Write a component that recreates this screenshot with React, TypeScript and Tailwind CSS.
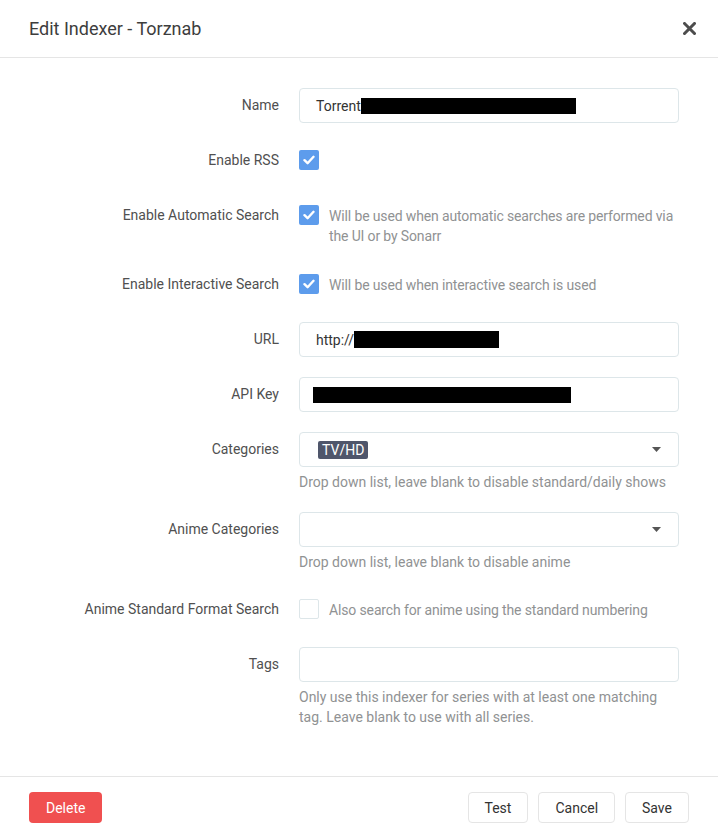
import React from "react";

const font = { fontFamily: "Roboto, 'Open Sans', sans-serif" };

function Check() {
  return (
    <span className="flex h-5 w-5 shrink-0 items-center justify-center rounded-[2px] bg-[#5d9cec]">
      <svg width="12" height="10" viewBox="0 0 12 10">
        <path d="M1.5 5.2 L4.6 8.2 L10.5 1.8" fill="none" stroke="#fff" strokeWidth="2.4" strokeLinecap="round" strokeLinejoin="round" />
      </svg>
    </span>
  );
}

function Row({ label, children }: { label: string; children: React.ReactNode }) {
  return (
    <div className="mb-5 flex gap-5">
      <div className="w-[249px] shrink-0 pt-[7px] text-right text-sm leading-5 text-[#505050]">{label}</div>
      <div className="w-[380px] shrink-0">{children}</div>
    </div>
  );
}

function Input({ children, select }: { children?: React.ReactNode; select?: boolean }) {
  return (
    <div className="flex h-[35px] items-center rounded-[4px] border border-[#dde6e9] bg-white pl-4 pr-[17px] text-sm text-[#333]">
      <div className="flex flex-1 items-center">{children}</div>
      {select && (
        <svg width="9" height="5" viewBox="0 0 9 5">
          <path d="M0 0 H9 L4.5 5 Z" fill="#555" />
        </svg>
      )}
    </div>
  );
}

function Help({ children }: { children: React.ReactNode }) {
  return <div className="mt-[5px] text-sm leading-5 text-[#909293]">{children}</div>;
}

function CheckRow({ label, checked, text, extra = "" }: { label: string; checked: boolean; text?: string; extra?: string }) {
  return (
    <Row label={label}>
      <div className={`flex min-h-[35px] gap-[10px] pt-[7px] ${extra}`}>
        {checked ? (
          <Check />
        ) : (
          <span className="h-5 w-5 shrink-0 rounded-[2px] border border-[#dde6e9] bg-white" />
        )}
        {text && <span className="mt-[1px] text-sm leading-5 tracking-[-0.01em] text-[#909293]">{text}</span>}
      </div>
    </Row>
  );
}

export default function App() {
  return (
    <div className="h-[838px] w-[718px] bg-white" style={font}>
      <div className="flex h-[58px] items-center justify-between border-b border-[#e5e5e5] pl-[29px] pr-[22px]">
        <h1 className="text-lg text-[#3d3d3d]">Edit Indexer - Torznab</h1>
        <svg width="13" height="13" viewBox="0 0 13 13">
          <path d="M1.5 1.5 L11.5 11.5 M11.5 1.5 L1.5 11.5" stroke="#4d4d4d" strokeWidth="3" strokeLinecap="square" />
        </svg>
      </div>

      <div className="h-[718px] px-[30px] pt-[30px]">
        <Row label="Name">
          <Input>
            <span>Torrent</span>
            <span className="inline-block h-4 w-[215px] bg-black" />
          </Input>
        </Row>

        <CheckRow label="Enable RSS" checked />
        <CheckRow label="Enable Automatic Search" checked extra="pb-[1px]" text="Will be used when automatic searches are performed via the UI or by Sonarr" />
        <CheckRow label="Enable Interactive Search" checked text="Will be used when interactive search is used" />

        <Row label="URL">
          <Input>
            <span>http://</span>
            <span className="inline-block h-[17px] w-[145px] bg-black" />
          </Input>
        </Row>

        <Row label="API Key">
          <div className="flex h-[35px] items-center rounded-[4px] border border-[#dde6e9] bg-white pl-[13px]">
            <span className="inline-block h-4 w-[258px] bg-black" />
          </div>
        </Row>

        <Row label="Categories">
          <Input select>
            <span className="ml-[2px] rounded-[2px] bg-[#4f566b] px-1 text-sm leading-[18px] text-white">TV/HD</span>
          </Input>
          <Help>Drop down list, leave blank to disable standard/daily shows</Help>
        </Row>

        <Row label="Anime Categories">
          <Input select />
          <Help>Drop down list, leave blank to disable anime</Help>
        </Row>

        <CheckRow label="Anime Standard Format Search" checked={false} text="Also search for anime using the standard numbering" />

        <Row label="Tags">
          <Input />
          <Help>Only use this indexer for series with at least one matching tag. Leave blank to use with all series.</Help>
        </Row>
      </div>

      <div className="flex items-center justify-between border-t border-[#e5e5e5] px-[29px] pt-[15px]">
        <button className="h-[31px] rounded-[4px] bg-[#f05050] px-[17px] text-sm text-white">Delete</button>
        <div className="flex gap-[10px]">
          {["Test", "Cancel", "Save"].map((b) => (
            <button key={b} className="h-[31px] rounded-[4px] border border-[#e5e5e5] bg-white px-4 text-sm text-[#333]">
              {b}
            </button>
          ))}
        </div>
      </div>
    </div>
  );
}
